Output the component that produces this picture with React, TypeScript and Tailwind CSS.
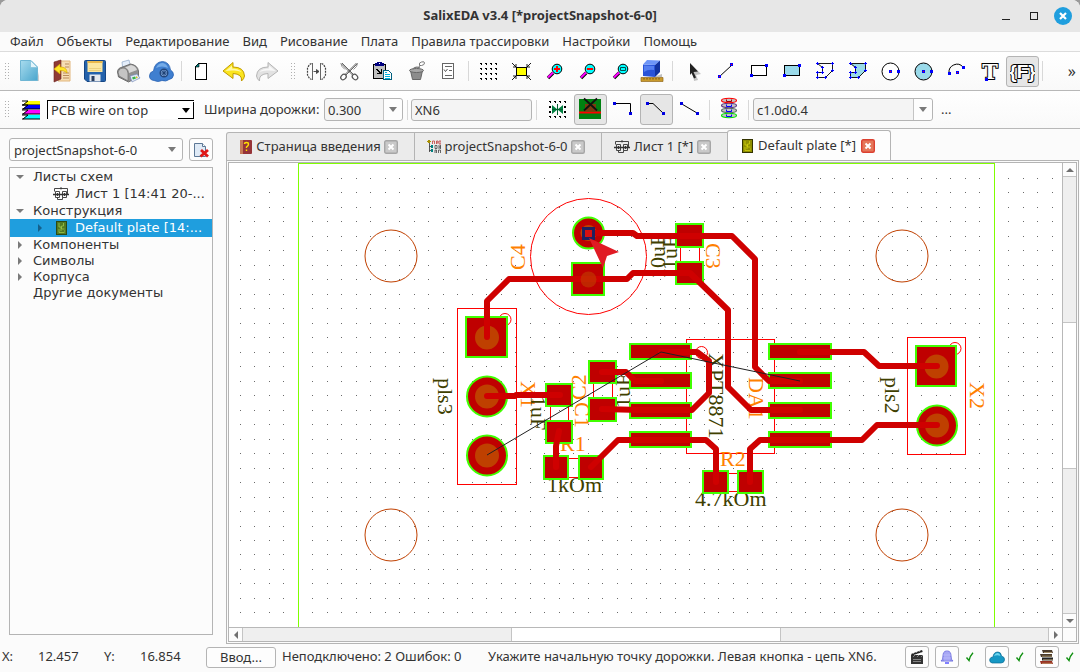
import React from "react";

type Kids = { children: React.ReactNode };

/* ---------- small building blocks ---------- */

function Ico({ children }: Kids) {
  return (
    <svg viewBox="0 0 25 25" className="block h-[25px] w-[25px]" aria-hidden="true">
      {children}
    </svg>
  );
}

function Tool({ label, active, children }: Kids & { label: string; active?: boolean }) {
  return (
    <button
      type="button"
      aria-label={label}
      aria-pressed={active}
      className={
        active
          ? "flex h-[31px] w-[33px] shrink-0 items-center justify-center rounded-[3px] border border-[#b4b4b4] bg-[#e6e6e6]"
          : "flex h-[31px] w-[33px] shrink-0 items-center justify-center"
      }
    >
      {children}
    </button>
  );
}

function Sep() {
  return (
    <div className="flex w-1.5 shrink-0 justify-center">
      <div className="h-5 w-px bg-[#d8d8d8]" />
    </div>
  );
}

function Handle() {
  return (
    <svg className="h-[17px] w-[5px] shrink-0" viewBox="0 0 5 17" shapeRendering="crispEdges" aria-hidden="true">
      {[0, 3, 6, 9, 12, 15].map((y) => (
        <path key={y} d={`M0 ${y}h1v1h-1zM3 ${y}h1v1h-1z`} fill="#b0b0b0" />
      ))}
    </svg>
  );
}

function Down({ className }: { className?: string }) {
  return (
    <svg viewBox="0 0 8 5" className={`h-[5px] w-2 ${className ?? ""}`} aria-hidden="true">
      <path d="M0 0h8L4 5z" fill="#7a7a7a" />
    </svg>
  );
}

function Node({ x, y, c = "#0000ff" }: { x: number; y: number; c?: string }) {
  return (
    <>
      <rect x={x - 1} y={y - 1} width="3" height="3" fill="#0000ff" />
      <rect x={x} y={y} width="1" height="1" fill={c} />
    </>
  );
}

/* ---------- main toolbar icons ---------- */

function NewDoc() {
  return (
    <Ico>
      <defs>
        <linearGradient id="nd" x1="0" y1="0" x2="1" y2="1">
          <stop offset="0" stopColor="#a9dcee" />
          <stop offset="1" stopColor="#4aa6cd" />
        </linearGradient>
      </defs>
      <path d="M5 22h17v-9l-2 8z" fill="#bbb" opacity=".7" />
      <path d="M3.500 1.500H14l6.500 6.500V21.500h-17z" fill="url(#nd)" stroke="#6fb6d4" />
      <path d="M13.500 1.500v7h7z" fill="#e3f5fb" stroke="#7dbdd8" strokeWidth=".7" />
    </Ico>
  );
}

function OpenDoc() {
  return (
    <Ico>
      <path d="M8 2h12v20H8z" fill="#f6ddb4" stroke="#e2b67c" />
      <path d="M15 5h4M15 8h4M13 14h6M13 16.500h6M13 19h6" stroke="#b98b5c" />
      <path d="M4 3l7-2v19l-7 3z" fill="#8f3a34" stroke="#6c2320" strokeWidth=".6" />
      <path d="M4 10l6-5v3c5 0 7 2 7 6-2-2-4-2.500-7-2.500V15z" fill="#ffe52a" stroke="#d9a800" strokeWidth=".7" />
    </Ico>
  );
}

function Save() {
  return (
    <Ico>
      <path d="M1.500 2.500q0-1 1-1h19q1 0 1 1v19q0 1-1 1H4l-2.500-2.500z" fill="#2462ab" stroke="#164684" />
      <path d="M4.500 2h15v11h-15z" fill="#fbe6a0" />
      <path d="M4.500 2h15v2h-15z" fill="#e9b84c" />
      <path d="M6 9.500h12M6 11.500h12" stroke="#e2c673" strokeWidth=".7" />
      <path d="M6.500 15.500h11v7h-11z" fill="#e5e9ee" />
      <path d="M8.500 17h3v5h-3z" fill="#2a3f60" />
    </Ico>
  );
}

function Printer() {
  return (
    <Ico>
      <path d="M6 3l7-2 2 9-8 2z" fill="#e4eefb" stroke="#8ea6c6" strokeWidth=".7" />
      <path d="M1.500 13q0-4 5-5l8-3q7 1 8 7v6l-10 5-10-5z" fill="#909090" stroke="#5c5c5c" strokeWidth=".8" />
      <path d="M2 13q1-4 5-4t5 5v8l-9-5z" fill="#c4c4c4" stroke="#6a6a6a" strokeWidth=".7" />
      <path d="M9 8.500l6-2.500q5 1 6 5l-8 3q0-4-4-5.500z" fill="#d8d8d8" />
      <path d="M14 17l7-2 3 4-8 4z" fill="#dfe8f5" stroke="#6c80b0" strokeWidth=".6" />
      <path d="M16 18.500l3-1 1 2-3 1z" fill="#35b44a" />
      <path d="M20 17l2 1.500-2 1z" fill="#e0c420" />
    </Ico>
  );
}

function Cloud() {
  return (
    <Ico>
      <path
        d="M5 21.500q-4.500-.5-4.500-4.500 0-4 4-5 1-9 9-9.500 7 .5 8 8.500 3 1.500 3 5-.5 4-4.500 4.500-3 2.500-7 1-4 2-8 0z"
        fill="#3f7fd0"
        stroke="#2c64b4"
        strokeWidth=".8"
      />
      <path d="M7 9q2-5 7-5 4 1 5 5-6-3-12 0z" fill="#74abe8" />
      <circle cx="15" cy="14" r="3.800" fill="#7fa6d8" stroke="#23477c" strokeWidth="1.400" />
      <path d="M15 10v8M11 14h8M12.500 11.500l5 5M17.500 11.500l-5 5" stroke="#23477c" strokeWidth=".8" />
      <circle cx="15" cy="14" r="1.400" fill="#1f4173" />
    </Ico>
  );
}

function BlankPage() {
  return (
    <Ico>
      <path d="M10.500 4.500h8v16h-11v-13z" fill="#fff" stroke="#000" shapeRendering="crispEdges" />
      <path d="M7 8l4-4v4z" fill="#008080" stroke="#000" strokeWidth=".6" />
    </Ico>
  );
}

function Undo() {
  return (
    <Ico>
      <path
        d="M2 12L12 3.500v4.500q11 0 11.500 9-.5 3-3 5 1-7-8.500-7.500v5z"
        fill="#fbe51e"
        stroke="#c19a00"
        strokeLinejoin="round"
      />
      <path d="M4.500 12L11 6.500V9.500q7 0 9.500 3.500-4-2-9.500-1.500z" fill="#fff8a8" />
    </Ico>
  );
}

function Redo() {
  return (
    <Ico>
      <path
        d="M24 12L14 3.500v4.500q-11 0-11.500 9 .5 3 3 5-1-7 8.500-7.500v5z"
        fill="#e2e2e2"
        stroke="#b5b5b5"
        strokeLinejoin="round"
      />
      <path d="M21.500 12L15 6.500V9.500q-7 0-9.500 3.500 4-2 9.500-1.500z" fill="#f8f8f8" />
    </Ico>
  );
}

function Mirror() {
  return (
    <Ico>
      <path d="M8.500 4v17M16.500 4v17" stroke="#666" />
      <path d="M7.500 4.500L5.500 5.500 3.500 9v7l2 3.500 2 1M17.500 4.500l2 1 2 3.500v7l-2 3.500-2 1" fill="none" stroke="#444" strokeWidth="1.200" strokeDasharray="2 1" />
      <path d="M9.500 12.500h5M12.500 10.500l2.500 2-2.500 2z" stroke="#444" strokeWidth=".9" fill="#444" />
    </Ico>
  );
}

function Cut() {
  return (
    <Ico>
      <path d="M4 4.500l12 12M5 4l12 12M20.500 4.500l-12 12M19.500 4l-12 12" stroke="#555" strokeWidth=".9" />
      <path d="M4 4.500q0 3 4 6M20.500 4.500q0 3-4 6" stroke="#777" fill="none" strokeWidth=".8" />
      <ellipse cx="6.500" cy="18" rx="3" ry="2.400" transform="rotate(-45 6.500 18)" fill="#fff" stroke="#555" strokeWidth="1.200" />
      <ellipse cx="18" cy="18" rx="3" ry="2.400" transform="rotate(45 18 18)" fill="#fff" stroke="#555" strokeWidth="1.200" />
    </Ico>
  );
}

function Paste() {
  return (
    <Ico>
      <g shapeRendering="crispEdges">
        <path d="M3.500 5.500h12v14h-12z" fill="#c0c0c0" stroke="#000" />
        <path d="M5 4h9v3H5z" fill="#000080" />
        <path d="M7 3h5v1H7z" fill="#000080" />
        <path d="M9 4h1v1H9z" fill="#fff" />
        <path d="M6 10h2v1H6zM7 11h2v1H7zM8 12h2v1H8zM9 13h2v1H9zM11 10h1v5h-5v-1h4z" fill="#000" />
        <path d="M13.500 11.500h5l3 3v6h-8z" fill="#fff" stroke="#006080" />
        <path d="M15 13h2v1h-2zM15 15h5v1h-5zM15 17h5v1h-5zM15 19h5v1h-5z" fill="#00b5e0" />
      </g>
    </Ico>
  );
}

function Bucket() {
  return (
    <Ico>
      <path d="M7.500 11.500h12l-2 9h-8z" fill="#8c8c8c" stroke="#666" />
      <ellipse cx="13.500" cy="11.500" rx="7" ry="2" fill="#a8a8a8" stroke="#666" />
      <path d="M10 10q3-3 7-1" fill="none" stroke="#777" strokeWidth="1.300" />
      <path d="M15.500 8l2-1.500M16.500 6.500q-1-3 2-3.500 3-1 3 1t-3 2.500z" fill="#fff" stroke="#777" />
    </Ico>
  );
}

function CheckList() {
  return (
    <Ico>
      <path d="M6.500 4.500h11v15h-11z" fill="#fff" stroke="#666" shapeRendering="crispEdges" />
      <path d="M9 7.500h7M13 11.500h3M9 16.500h7" stroke="#666" />
      <path d="M8 10.500l1.500 2 2-2.500" fill="none" stroke="#555" />
    </Ico>
  );
}

function Grid() {
  return (
    <Ico>
      <g shapeRendering="crispEdges">
        {[5, 10, 15, 20].map((x) =>
          [4, 9, 14, 19].map((y) => <path key={`${x}-${y}`} d={`M${x} ${y}h2v1h-2zM${x + 1} ${y + 1}h1v1h-1z`} fill="#000" />)
        )}
      </g>
    </Ico>
  );
}

function Fit() {
  return (
    <Ico>
      <path d="M8.500 8.500h10v8h-10z" fill="#ffff00" stroke="#000" shapeRendering="crispEdges" />
      <path
        d="M4 4l4 4M8 5v3H5M23 4l-4 4M19 5v3h3M4 21l4-4M5 17h3v3M23 21l-4-4M22 17h-3v3"
        fill="none"
        stroke="#000"
        strokeWidth=".9"
      />
    </Ico>
  );
}

function Lens({ children }: { children?: React.ReactNode }) {
  return (
    <Ico>
      <path d="M12 14l-5 5" stroke="#000" strokeWidth="3.400" />
      <path d="M12 13.500l-5 5" stroke="#ff00ff" strokeWidth="2.200" />
      <circle cx="16" cy="10" r="4.800" fill="#00ffff" stroke="#000" />
      {children}
    </Ico>
  );
}

function Cube() {
  return (
    <Ico>
      <path d="M1 18.500h22v4H1z" fill="#c99a2c" stroke="#94691b" strokeWidth=".7" />
      <path d="M4 19v1.500M7 19v1.500M10 19v1.500M13 19v1.500M16 19v1.500M19 19v1.500" stroke="#5c3d0d" strokeWidth=".8" />
      <path d="M16 17l6-2v3h-7z" fill="#999" opacity=".6" />
      <path d="M3 5.500L15 6v12L3 17z" fill="#2953d8" />
      <path d="M3 5.500L7 1l13 .5L15 6z" fill="#6d95f7" />
      <path d="M20 1.500V13l-5 5V6z" fill="#1233a0" />
      <path d="M4 6.500l10 .5v4Q8 10 4 13z" fill="#557ff0" />
    </Ico>
  );
}

function Pointer() {
  return (
    <Ico>
      <path d="M13 6l9 9-5 1 2 5-4 1z" fill="#aaa" opacity=".7" />
      <path d="M11 4l8 8.500-4.500.500 2.500 5.500-2 1-2.500-5.500L11 16z" fill="#222" />
    </Ico>
  );
}

function LineTool() {
  return (
    <Ico>
      <path d="M7 18L20 6" stroke="#000" />
      <g shapeRendering="crispEdges">
        <Node x={7} y={17} c="#ff0000" />
        <Node x={19} y={5} c="#ff0000" />
      </g>
    </Ico>
  );
}

function RectTool({ fill }: { fill: string }) {
  return (
    <Ico>
      <g shapeRendering="crispEdges">
        <path d="M6.500 6.500h15v10h-15z" fill={fill} stroke="#000" />
        <Node x={21} y={6} />
        <Node x={6} y={16} />
      </g>
    </Ico>
  );
}

function PolyTool({ fill }: { fill: string }) {
  const pts = [
    [6, 4],
    [21, 4],
    [21, 11],
    [14, 18],
    [6, 18],
    [6, 13],
    [11, 13],
    [11, 8],
  ];
  return (
    <Ico>
      <path d="M6.500 4.500h15v7l-7 7h-8v-5h5v-5z" fill={fill} stroke="#000" strokeWidth=".9" />
      <g shapeRendering="crispEdges">
        {pts.map(([x, y]) => (
          <path key={`${x}-${y}`} d={`M${x - 1} ${y}h3v1h-3zM${x} ${y - 1}h1v3h-1z`} fill="#0000ff" />
        ))}
      </g>
    </Ico>
  );
}

function CircleTool({ fill }: { fill: string }) {
  return (
    <Ico>
      <circle cx="13.500" cy="12.500" r="8.500" fill={fill} stroke="#000" />
      <g shapeRendering="crispEdges">
        <Node x={13} y={12} c="#ff0000" />
        <Node x={21} y={12} />
      </g>
    </Ico>
  );
}

function ArcTool() {
  return (
    <Ico>
      <path d="M6 14a8 8 0 0 1 14-6" fill="none" stroke="#000" />
      <g shapeRendering="crispEdges">
        <Node x={6} y={14} />
        <Node x={20} y={8} />
        <Node x={14} y={13} c="#ff0000" />
      </g>
    </Ico>
  );
}

function TextTool() {
  return (
    <Ico>
      <text
        x="14"
        y="20"
        textAnchor="middle"
        fontFamily="DejaVu Serif"
        fontWeight="700"
        fontSize="21"
        fill="#fff"
        stroke="#000"
        strokeWidth="2"
        paintOrder="stroke"
      >
        T
      </text>
      <rect x="9" y="19" width="3" height="3" fill="#0000ff" />
    </Ico>
  );
}

function ParamTool() {
  return (
    <Ico>
      <text
        x="12.500"
        y="18.500"
        textAnchor="middle"
        fontFamily="Liberation Sans"
        fontWeight="700"
        fontSize="19"
        fill="#fff"
        stroke="#000"
        strokeWidth="2"
        paintOrder="stroke"
      >
        {"{F}"}
      </text>
    </Ico>
  );
}

/* ---------- second toolbar icons ---------- */

function Layers() {
  const rows: [number, string][] = [
    [1, "#ffff00"],
    [5, "#0000ff"],
    [10, "#ff00ff"],
    [15, "#00ffff"],
  ];
  return (
    <svg viewBox="0 0 18 20" className="h-5 w-[18px] shrink-0" aria-hidden="true">
      {rows.map(([y, c]) => (
        <g key={c}>
          <path d={`M5 ${y}H18v4H1z`} fill={c} />
          <path d={`M0 ${y + 4}H18M0 ${y}h6l-5 4`} stroke="#000" fill="none" />
        </g>
      ))}
    </svg>
  );
}

function Snap() {
  return (
    <Ico>
      <g shapeRendering="crispEdges" fill="#000">
        {[4, 9, 14, 19].map((x) => (
          <path key={x} d={`M${x} 4h2v1h-2zM${x + 1} 5h1v1h-1zM${x} 19h2v1h-2zM${x + 1} 20h1v1h-1z`} />
        ))}
        <path d="M4 9h2v2H4zM4 14h2v2H4zM19 9h2v2h-2zM19 14h2v2h-2z" />
      </g>
      <path d="M7 8l5.500 4.500L7 17zM18 8l-5.500 4.500L18 17z" fill="#008040" />
      <path d="M12.500 7v11M7 12.500h11" stroke="#006030" />
    </Ico>
  );
}

function WireOver() {
  return (
    <Ico>
      <path d="M1 2h22v20H1z" fill="#008010" />
      <path d="M7 7h11v7H7z" fill="#7a3a10" />
      <path d="M1 15.500h22" stroke="#ff0000" strokeWidth="2" />
      <path d="M6 1.500l13 12M19 1.500L6 13.500" stroke="#101010" strokeWidth="1.800" />
    </Ico>
  );
}

function Wire({ d, a, b }: { d: string; a: [number, number]; b: [number, number] }) {
  return (
    <Ico>
      <path d={d} fill="none" stroke="#000" />
      <g shapeRendering="crispEdges" fill="#0000e0">
        <rect x={a[0] - 1} y={a[1] - 1} width="3" height="3" />
        <rect x={b[0] - 1} y={b[1] - 1} width="3" height="3" />
      </g>
    </Ico>
  );
}

function Via() {
  const rings: [number, string][] = [
    [18.5, "#00e000"],
    [13.5, "#557060"],
    [8.5, "#5c3580"],
    [3.5, "#ff0000"],
  ];
  return (
    <Ico>
      {rings.map(([y, c]) => (
        <g key={c}>
          <ellipse cx="13" cy={y} rx="7.500" ry="2.200" fill="#c4c4c4" stroke={c} strokeWidth="1.100" />
          <path d={`M10.500 ${y - 1}v2h5v-2`} fill="none" stroke={c === "#ff0000" ? "#a00000" : "#0000ff"} />
        </g>
      ))}
    </Ico>
  );
}

/* ---------- document icons ---------- */

function BookIcon() {
  return (
    <svg viewBox="0 0 14 16" className="h-4 w-3.5 shrink-0" aria-hidden="true">
      <rect x="1" y="1" width="12" height="14" rx="1" fill="#963438" />
      <path d="M1 1h3v14H1z" fill="#c77a58" />
      <path d="M5.500 5q0-1.500 2-1.500t2 1.700Q9.500 6.500 7.500 8v1M7.500 10.500v1.500" fill="none" stroke="#ffe000" strokeWidth="1.400" />
    </svg>
  );
}

function TreeIcon() {
  return (
    <svg viewBox="0 0 14 14" className="h-3.5 w-3.5 shrink-0" aria-hidden="true">
      <path d="M2.500 2v10M2.500 6.500h3M2.500 10.500h3" stroke="#333" strokeWidth=".8" />
      <path d="M1 0h2v1h1v1H3v1H1V2H0V1h1z" fill="#a89000" />
      <path d="M4 5h2v3H4zM4 9h2v3H4z" fill="#008080" />
      <path d="M5.500 4V1h2v3M9.500 4V1h1.500v2H9.500M12 1h2v3h-2z" fill="none" stroke="#c04040" strokeWidth=".8" />
      <path d="M8 5.500h2v3H8zM12 5v4M13.500 5v4M12 7h2M8 13v-3h1.500v3M11.500 13v-3h2v3" fill="none" stroke="#444" strokeWidth=".8" />
    </svg>
  );
}

function SheetIcon() {
  return (
    <svg viewBox="0 0 16 14" className="h-3.5 w-4 shrink-0" aria-hidden="true">
      <g fill="none" stroke="#333" strokeWidth=".9">
        <path d="M2.500 4.500h4v6h-4zM9.500 4.500h4v6h-4zM1.500 4.500v-3h13v6M4.500 10.500v2h5v-2M8 0v2.500" />
        <path d="M0 7.500h16M4.500 6v3M11.500 6v3" strokeWidth="1.300" />
      </g>
    </svg>
  );
}

function BoardIcon({ bright }: { bright?: boolean }) {
  return (
    <svg viewBox="0 0 11 14" className="h-3.5 w-[11px] shrink-0" aria-hidden="true">
      <rect x=".5" y=".5" width="10" height="13" fill={bright ? "#8f8f00" : "#527a22"} stroke={bright ? "#333300" : "#2c4a12"} />
      <path
        d="M3 2v4h2v4M7.500 2v3h-2v3h3M3 8v3.500h5.500M8.500 9.500v1"
        fill="none"
        stroke={bright ? "#d8d810" : "#a8d050"}
        strokeWidth=".7"
      />
    </svg>
  );
}

function CloseBox({ hot, label }: { hot?: boolean; label: string }) {
  return (
    <button type="button" aria-label={label} className="h-3.5 w-3.5 shrink-0">
      <svg viewBox="0 0 14 14" className="block h-3.5 w-3.5">
        <rect x=".7" y=".7" width="12.600" height="12.600" rx="1.500" fill={hot ? "#e5775a" : "#c9c9c9"} stroke={hot ? "#dc4030" : "#a6a6a6"} strokeWidth="1.400" />
        <path d="M4.500 4.500l5 5M9.500 4.500l-5 5" stroke="#fff" strokeWidth="2" />
      </svg>
    </button>
  );
}

/* ---------- board drawing ---------- */

const ORANGE = "#ff8000";
const OLIVE = "#404000";

function Dots() {
  let d = "";
  for (let i = 0; i < 140; i++) {
    const x = Math.floor(240 + i * 14.5);
    if (x === 298) continue;
    for (let k = 0; k < 80; k++) d += `M${x} ${Math.round(178 + k * 14.48)}h1v1h-1z`;
  }
  return <path d={d} fill="#6a6a6a" shapeRendering="crispEdges" />;
}

function Pad({ x, y, w, h }: { x: number; y: number; w: number; h: number }) {
  return <rect x={x + 1} y={y + 1} width={w - 2} height={h - 2} fill="#bf0000" stroke="#40ff00" strokeWidth="2" />;
}

function RoundPad({ x, y, r, hole }: { x: number; y: number; r: number; hole: number }) {
  return (
    <>
      <circle cx={x} cy={y} r={r - 1} fill="#bf0000" stroke="#40ff00" strokeWidth="2" />
      <circle cx={x} cy={y} r={hole} fill="#bf4000" />
    </>
  );
}

function Label({ x, y, rot = 0, fill, children }: { x: number; y: number; rot?: number; fill: string; children: string }) {
  return (
    <text transform={`translate(${x} ${y}) rotate(${rot})`} fill={fill} fontFamily="Liberation Serif" fontSize="22">
      {children}
    </text>
  );
}

const traces = [
  "M588 233H633L637 236H732L755 259V367L769 381H800",
  "M487 337V301L509 279H627L633 273H690L728 310V387L751 410H800",
  "M487 396H515L516 395H560",
  "M559 431L556 446V467",
  "M591 467L618 440H706L716 449V482",
  "M602 372H626L635 381H661",
  "M602 409L640 410H692L709 393V361L697 352H661",
  "M750 482V449L760 440H862L877 425H937",
  "M800 352H864L879 366H937",
];

function Board() {
  return (
    <svg className="min-h-[464px] min-w-0 flex-1 bg-white" role="img" aria-label="Default plate">
      <g transform="translate(-229 -163)">
        <Dots />
        <path d="M298.500 900V163.500H994.500V900" fill="none" stroke="#80ff00" shapeRendering="crispEdges" />
        <g fill="none" stroke="#c04000">
          <circle cx="391" cy="256" r="26" />
          <circle cx="902" cy="256" r="26" />
          <circle cx="391" cy="535" r="26" />
          <circle cx="902" cy="535" r="26" />
        </g>
        <g fill="none" stroke="#ff0000">
          <circle cx="588.500" cy="256.500" r="58" />
          <circle cx="505" cy="319.500" r="6" />
          <circle cx="701.500" cy="352.500" r="6" />
          <circle cx="955" cy="348.500" r="6" />
          <path
            shapeRendering="crispEdges"
            d="M457.500 308.500h59v176h-59zM907.500 337.500h58v117h-58zM686.500 339.500h88v114h-88zM680.500 240v30M699.500 240v30M593.500 375v30M612.500 375v30M550.500 400v25M568.500 400v25M565 458.500h20M565 477.500h20M725 473.500h20M725 491.500h20"
          />
        </g>

        <Label x={525} y={270} rot={-90} fill={ORANGE}>C4</Label>
        <Label x={706} y={243} rot={90} fill={ORANGE}>C3</Label>
        <Label x={665} y={279} rot={-90} fill={OLIVE}>10uF</Label>
        <Label x={677} y={270} rot={-90} fill={OLIVE}>1uF</Label>
        <Label x={438} y={378} rot={90} fill={OLIVE}>pls3</Label>
        <Label x={521} y={381} rot={90} fill={ORANGE}>X1</Label>
        <Label x={531} y={396} rot={90} fill={OLIVE}>1uF</Label>
        <Label x={586} y={400} rot={-90} fill={ORANGE}>C2</Label>
        <Label x={575} y={402} rot={90} fill={ORANGE}>C1</Label>
        <Label x={630} y={408} rot={-90} fill={OLIVE}>1uF</Label>
        <Label x={560} y={451} fill={ORANGE}>R1</Label>
        <Label x={547} y={492} fill={OLIVE}>1kOm</Label>
        <Label x={720} y={466} fill={ORANGE}>R2</Label>
        <Label x={695} y={506} fill={OLIVE}>4.7kOm</Label>
        <Label x={709} y={353} rot={90} fill={OLIVE}>XPT8871</Label>
        <Label x={749} y={377} rot={90} fill={ORANGE}>DA1</Label>
        <Label x={885} y={377} rot={90} fill={OLIVE}>pls2</Label>
        <Label x={970} y={382} rot={90} fill={ORANGE}>X2</Label>

        <RoundPad x={588.5} y={233} r={16.5} hole={8} />
        <Pad x={571} y={262} w={34} h={34} />
        <Pad x={465} y={316} w={43} h={42} />
        <circle cx="487" cy="337.500" r="12" fill="#bf4000" />
        <RoundPad x={487} y={396.5} r={21} hole={12} />
        <RoundPad x={487} y={455.5} r={21} hole={12} />
        <Pad x={915} y={345} w={42} h={42} />
        <circle cx="936.500" cy="366.500" r="12" fill="#bf4000" />
        <RoundPad x={937} y={425.5} r={21} hole={12} />
        {[343, 372, 402, 431].map((y) => (
          <g key={y}>
            <Pad x={629} y={y} w={63} h={17} />
            <Pad x={768} y={y} w={64} h={17} />
          </g>
        ))}
        <Pad x={675} y={223} w={29} h={25} />
        <Pad x={675} y={261} w={29} h={24} />
        <Pad x={588} y={360} w={29} h={24} />
        <Pad x={588} y={397} w={29} h={25} />
        <Pad x={545} y={383} w={28} h={24} />
        <Pad x={545} y={420} w={28} h={24} />
        <Pad x={543} y={455} w={26} h={25} />
        <Pad x={578} y={455} w={26} h={25} />
        <Pad x={702} y={470} w={27} h={24} />
        <Pad x={737} y={470} w={27} h={24} />

        <g fill="none" stroke="#cf0000" strokeWidth="6" strokeLinejoin="round" strokeLinecap="round">
          {traces.map((d) => (
            <path key={d} d={d} />
          ))}
        </g>
        <circle cx="588.500" cy="279.500" r="8" fill="#bf4000" opacity=".6" />
        <path d="M487 455L661 352L800 381" fill="none" stroke="#202020" />
        <rect x="583.500" y="228.500" width="10" height="10" fill="#cf0000" stroke="#202060" strokeWidth="3" />
        <path d="M585 230h7v7h-7z" fill="#d81010" />
        <path d="M589 238L619 252L607 256L603 268Z" fill="#e01b24" />
      </g>
    </svg>
  );
}

/* ---------- page parts ---------- */

function Arrow({ d, label, className }: { d: string; label: string; className: string }) {
  return (
    <button type="button" aria-label={label} className={`flex shrink-0 items-center justify-center bg-[#fcfcfc] ${className}`}>
      <svg viewBox="0 0 8 8" className="h-2 w-2">
        <path d={d} fill="#707070" />
      </svg>
    </button>
  );
}

const menu = ["Файл", "Объекты", "Редактирование", "Вид", "Рисование", "Плата", "Правила трассировки", "Настройки", "Помощь"];

function TitleBar() {
  return (
    <header className="grid h-8 grid-cols-[1fr_auto_1fr] items-center rounded-t-lg bg-[#e7e7e7]">
      <span />
      <h1 className="text-[13px] font-bold text-[#333]">SalixEDA v3.4 [*projectSnapshot-6-0]</h1>
      <div className="flex items-center justify-end gap-5 pr-2">
        <button type="button" aria-label="Свернуть" className="h-2 w-2 border-b border-[#222]" />
        <button type="button" aria-label="Развернуть" className="h-2 w-2 border border-[#222]" />
        <button type="button" aria-label="Закрыть" className="-ml-1 flex h-[18px] w-[18px] items-center justify-center rounded-full bg-[#1f9ede]">
          <svg viewBox="0 0 8 8" className="h-2 w-2">
            <path d="M1 1l6 6M7 1L1 7" stroke="#fff" strokeWidth="2.200" />
          </svg>
        </button>
      </div>
    </header>
  );
}

function MainToolbar() {
  return (
    <div className="flex h-[39px] items-center border-b border-[#b8b8b8] bg-gradient-to-b from-white to-[#f9f9f9] pl-[5px] pr-1">
      <Handle />
      <div className="w-[3px] shrink-0" />
      <Tool label="Новый"><NewDoc /></Tool>
      <Tool label="Открыть"><OpenDoc /></Tool>
      <Tool label="Сохранить"><Save /></Tool>
      <Tool label="Печать"><Printer /></Tool>
      <Tool label="Облако"><Cloud /></Tool>
      <Sep />
      <Tool label="Страница"><BlankPage /></Tool>
      <Tool label="Отменить"><Undo /></Tool>
      <Tool label="Повторить"><Redo /></Tool>
      <div className="flex w-[17px] shrink-0 justify-center pl-1"><Handle /></div>
      <Tool label="Отразить"><Mirror /></Tool>
      <Tool label="Вырезать"><Cut /></Tool>
      <Tool label="Вставить"><Paste /></Tool>
      <Tool label="Удалить"><Bucket /></Tool>
      <Tool label="Свойства"><CheckList /></Tool>
      <Sep />
      <Tool label="Сетка"><Grid /></Tool>
      <Tool label="Вписать"><Fit /></Tool>
      <Tool label="Увеличить">
        <Lens><path d="M13 10h6M16 7v6" stroke="#ff0000" strokeWidth="2" /></Lens>
      </Tool>
      <Tool label="Уменьшить">
        <Lens><path d="M13 10h6" stroke="#ff0000" strokeWidth="2" /></Lens>
      </Tool>
      <Tool label="Увеличить область">
        <Lens><path d="M13.500 8.500h5v3h-5z" fill="none" stroke="#005050" /></Lens>
      </Tool>
      <Tool label="3D"><Cube /></Tool>
      <Sep />
      <Tool label="Выбор"><Pointer /></Tool>
      <Tool label="Линия"><LineTool /></Tool>
      <Tool label="Прямоугольник"><RectTool fill="#fff" /></Tool>
      <Tool label="Залитый прямоугольник"><RectTool fill="#9adaea" /></Tool>
      <Tool label="Многоугольник"><PolyTool fill="none" /></Tool>
      <Tool label="Залитый многоугольник"><PolyTool fill="#9adaea" /></Tool>
      <Tool label="Окружность"><CircleTool fill="#fff" /></Tool>
      <Tool label="Круг"><CircleTool fill="#9adaea" /></Tool>
      <Tool label="Дуга"><ArcTool /></Tool>
      <Tool label="Текст"><TextTool /></Tool>
      <div className="ml-px flex">
        <Tool label="Параметр" active><ParamTool /></Tool>
      </div>
      <Sep />
      <button type="button" aria-label="Ещё" className="ml-auto text-base leading-none">»</button>
    </div>
  );
}

function WireToolbar() {
  return (
    <div className="flex h-[38px] items-center border-b border-[#b8b8b8] bg-gradient-to-b from-white to-[#f9f9f9] pl-[5px]">
      <Handle />
      <div className="ml-3 mr-[7px] flex"><Layers /></div>
      <div className="relative w-[147px] shrink-0">
        <select aria-label="Слой" className="block h-[19px] w-full appearance-none border-l border-t border-black bg-white pl-[3px] leading-4">
          <option>PCB wire on top</option>
        </select>
        <span className="pointer-events-none absolute bottom-0 right-0 flex h-[17px] w-4 items-center justify-center border-b border-r border-black">
          <svg viewBox="0 0 8 5" className="h-[5px] w-2"><path d="M0 0h8L4 5z" fill="#000" /></svg>
        </span>
      </div>
      <label htmlFor="width" className="ml-2.5 w-[120px] shrink-0 whitespace-nowrap">Ширина дорожки:</label>
      <div className="relative w-[79px] shrink-0">
        <select id="width" className="block h-[23px] w-full appearance-none rounded-[3px] border border-[#b4b4b4] bg-[#f4f4f4] pl-[3px] leading-5">
          <option>0.300</option>
        </select>
        <span className="pointer-events-none absolute inset-y-px right-px flex w-[19px] items-center justify-center rounded-r-[3px] border-l border-[#c4c4c4] bg-[#fdfdfd]"><Down /></span>
      </div>
      <div className="mx-px"><Sep /></div>
      <input aria-label="Цепь" defaultValue="XN6" className="h-[22px] w-[121px] shrink-0 rounded-[3px] border border-[#b4b4b4] bg-[#f4f4f4] px-[3px]" />
      <div className="ml-px mr-0.5"><Sep /></div>
      <Tool label="Привязка к сетке"><Snap /></Tool>
      <Tool label="Проверка зазоров" active><WireOver /></Tool>
      <Tool label="Под прямым углом"><Wire d="M3 6.500h16.500V16" a={[3, 6]} b={[19, 16]} /></Tool>
      <Tool label="Под 45 градусов" active><Wire d="M3 6.500h6L19 16" a={[3, 6]} b={[19, 16]} /></Tool>
      <Tool label="Под любым углом"><Wire d="M4 6.500L20 16" a={[4, 6]} b={[20, 16]} /></Tool>
      <Sep />
      <Tool label="Переходное отверстие"><Via /></Tool>
      <div className="mr-0.5"><Sep /></div>
      <div className="relative w-[180px] shrink-0">
        <select aria-label="Тип перехода" className="block h-[23px] w-full appearance-none rounded-[3px] border border-[#b4b4b4] bg-[#f4f4f4] pl-[3px] leading-5">
          <option>c1.0d0.4</option>
        </select>
        <span className="pointer-events-none absolute inset-y-px right-px flex w-[19px] items-center justify-center rounded-r-[3px] border-l border-[#c4c4c4] bg-[#fdfdfd]"><Down /></span>
      </div>
      <button type="button" className="ml-2">...</button>
    </div>
  );
}

function Twist({ open, light }: { open?: boolean; light?: boolean }) {
  return (
    <svg viewBox="0 0 8 8" className="h-2 w-2 shrink-0" aria-hidden="true">
      <path d={open ? "M0 2h8L4 6z" : "M2 0l4 4-4 4z"} fill={light ? "#14608c" : "#7a7a7a"} />
    </svg>
  );
}

function Sidebar() {
  const closed = ["Компоненты", "Символы", "Корпуса"];
  return (
    <aside className="flex w-[213px] shrink-0 flex-col pb-[9px] pl-[9px] pt-[9px]">
      <div className="flex gap-1.5">
        <div className="relative w-[174px]">
          <select aria-label="Проект" className="block h-[23px] w-full appearance-none rounded-[3px] border border-[#b4b4b4] bg-[#fdfdfd] pl-1 leading-5">
            <option>projectSnapshot-6-0</option>
          </select>
          <Down className="pointer-events-none absolute right-[7px] top-[9px]" />
        </div>
        <button type="button" aria-label="Закрыть проект" className="flex h-[23px] w-6 items-center justify-center rounded-[3px] border border-[#b4b4b4] bg-[#fdfdfd]">
          <svg viewBox="0 0 17 16" className="h-4 w-[17px]">
            <path d="M1.500 1.500h8l3 3v10h-11z" fill="#dfeaf6" stroke="#5d7896" />
            <path d="M9.500 1.500v3h3" fill="#fff" stroke="#5d7896" />
            <path d="M8 8l7 6.500M15 8l-7.500 6.500" stroke="#e01818" strokeWidth="2.800" />
          </svg>
        </button>
      </div>
      <ul role="tree" className="mt-1.5 flex-1 border border-[#b4b4b4] bg-[#fcfcfc] font-['DejaVu_Sans'] text-[13px] leading-4">
        <li className="flex h-[17px] items-center gap-[9px] pl-1.5"><Twist open />Листы схем</li>
        <li className="flex h-[17px] items-center gap-1.5 whitespace-nowrap pl-[43px]"><SheetIcon />Лист 1 [14:41 20-...</li>
        <li className="flex h-[17px] items-center gap-[9px] pl-1.5"><Twist open />Конструкция</li>
        <li aria-selected="true" className="flex h-[18px] items-center whitespace-nowrap bg-[#1f9ede] pl-[26px] text-white">
          <Twist light /><span className="ml-3 mr-[8px] flex"><BoardIcon /></span>Default plate [14:...
        </li>
        {closed.map((t) => (
          <li key={t} className="flex h-4 items-center gap-[9px] pl-1.5"><Twist />{t}</li>
        ))}
        <li className="flex h-4 items-center pl-[23px]">Другие документы</li>
      </ul>
    </aside>
  );
}

function Tabs() {
  const tab = "flex h-7 items-center border border-b-0 border-[#b4b4b4] bg-[#ebebeb]";
  return (
    <div role="tablist" className="flex h-[30px] items-end">
      <div role="tab" className={`${tab} w-[189px] justify-between rounded-tl-[3px] pl-3 pr-4`}>
        <BookIcon /><span>Страница введения</span><CloseBox label="Закрыть Страница введения" />
      </div>
      <div role="tab" className={`${tab} w-[187px] justify-between border-l-0 pl-3 pr-4`}>
        <TreeIcon /><span>projectSnapshot-6-0</span><CloseBox label="Закрыть projectSnapshot-6-0" />
      </div>
      <div role="tab" className={`${tab} w-[125px] justify-between border-x-0 pl-3 pr-4`}>
        <SheetIcon /><span>Лист 1 [*]</span><CloseBox label="Закрыть Лист 1" />
      </div>
      <div role="tab" aria-selected="true" className="flex h-[30px] w-[164px] items-center justify-between rounded-t-[3px] border border-b-0 border-[#b4b4b4] bg-[#fdfdfd] pl-[14px] pr-[15px]">
        <BoardIcon bright /><span>Default plate [*]</span><CloseBox hot label="Закрыть Default plate" />
      </div>
    </div>
  );
}

function Workspace() {
  return (
    <main className="ml-[13px] flex min-w-0 flex-1 flex-col pr-px pt-px">
      <Tabs />
      <div className="flex flex-1 flex-col border border-[#b4b4b4] p-px">
        <div className="flex flex-1 flex-col border border-[#b4b4b4]">
          <div className="flex flex-1">
            <Board />
            <div className="flex w-3.5 shrink-0 flex-col border-l border-[#b8b8b8] bg-[#efefef]">
              <Arrow label="Вверх" d="M0 6h8L4 2z" className="h-3.5 border-b border-[#c4c4c4]" />
              <div className="flex-[146]" />
              <div className="flex-[146] border-y border-[#c4c4c4] bg-white" />
              <div className="flex-[145]" />
              <Arrow label="Вниз" d="M0 2h8L4 6z" className="h-3.5 border-t border-[#c4c4c4]" />
            </div>
          </div>
          <div className="flex h-3.5 shrink-0 border-t border-[#b8b8b8] bg-[#efefef]">
            <Arrow label="Влево" d="M6 0v8L2 4z" className="w-3.5 border-r border-[#c4c4c4]" />
            <div className="flex-[269]" />
            <div className="flex-[269] border-x border-[#c4c4c4] bg-white" />
            <div className="flex-[268]" />
            <Arrow label="Вправо" d="M2 0v8l4-4z" className="w-3.5 border-l border-[#c4c4c4]" />
            <div className="w-3.5 shrink-0 border-l border-[#b8b8b8] bg-[#fcfcfc]" />
          </div>
        </div>
      </div>
    </main>
  );
}

function StatusButton({ label, children }: Kids & { label: string }) {
  return (
    <button type="button" aria-label={label} className="flex h-[22px] w-6 shrink-0 items-center justify-center rounded-[3px] border border-[#b4b4b4] bg-[#fdfdfd]">
      <svg viewBox="0 0 16 16" className="h-4 w-4">{children}</svg>
    </button>
  );
}

function Tick() {
  return (
    <svg viewBox="0 0 10 10" className="mr-1 h-2.5 w-2.5 shrink-0" aria-hidden="true">
      <path d="M1.500 5.500L4 8.500Q5 4 8 .8" fill="none" stroke="#109010" strokeWidth="1.400" />
    </svg>
  );
}

function StatusBar() {
  return (
    <footer className="flex h-[29px] items-center whitespace-nowrap pb-[3px] pl-0.5">
      <span className="w-9">X:</span>
      <span className="w-[66px]">12.457</span>
      <span className="w-9">Y:</span>
      <span className="w-[66px]">16.854</span>
      <button type="button" className="h-[21px] w-[70px] rounded-[3px] border border-[#b4b4b4] bg-[#fdfdfd] leading-4">Ввод...</button>
      <span className="ml-1.5 w-[206px]">Неподключено: 2 Ошибок: 0</span>
      <span>Укажите начальную точку дорожки. Левая кнопка - цепь XN6.</span>
      <div className="ml-auto flex items-center gap-1.5 pr-px">
        <StatusButton label="Видео">
          <path d="M2 6h12v9H2z" fill="#333" />
          <path d="M2 5l11-4 .7 2L3 6.500z" fill="#222" />
          <path d="M4 4l1.500 1.500M7 3l1.500 1.500M10 2l1.500 1.500M4 8l2-2M8 8l2-2M12 8l2-2M4 10.500h8M4 12.500h8" stroke="#999" strokeWidth=".8" />
        </StatusButton>
        <StatusButton label="Уведомления">
          <path d="M2 12q2-1 2-5 0-5 4-5t4 5q0 4 2 5z" fill="#9a9af0" stroke="#7575e0" />
          <path d="M4 6h8M3.500 9h9M6 3v9M8 2v10M10 3v9" stroke="#c8c8ff" strokeWidth=".6" />
          <path d="M6 13h4v2H6z" fill="#8080ff" />
        </StatusButton>
        <Tick />
        <StatusButton label="Облако">
          <path d="M3 14Q0 13 .8 10 1.500 8 4 8q.5-5 5-5 3 0 3.500 4Q16 8 15.500 11q-.5 3-3.500 3z" fill="#1698c4" stroke="#0a6a94" strokeWidth=".7" />
          <path d="M5 7q1-3 4-3 2 .5 2.500 3Q8 5.500 5 7z" fill="#6fd6ee" />
        </StatusButton>
        <Tick />
        <StatusButton label="Библиотека">
          <path d="M3 1h10l1 3H4zM1 5h12v3H2z" fill="#4a3a2a" />
          <path d="M3 8.500h11v3H3z" fill="#222" />
          <path d="M1 12h12l1 3H2z" fill="#983020" />
          <path d="M5 3.500h8M3 7.200h10M4 10.800h10M3 14.300h10" stroke="#c8b080" strokeWidth=".7" />
        </StatusButton>
        <Tick />
      </div>
    </footer>
  );
}

export default function App() {
  return (
    <div className="bg-[#9a9a9a] font-['Noto_Sans',sans-serif] text-[13px] text-[#333]">
      <div className="flex min-h-screen flex-col rounded-t-lg bg-[#fbfbfb]">
        <TitleBar />
        <nav className="flex h-5 items-center gap-[13px] whitespace-nowrap border-b border-[#dcdcdc] px-2.5 pb-0.5 leading-4">
          {menu.map((m) => (
            <button type="button" key={m}>{m}</button>
          ))}
        </nav>
        <MainToolbar />
        <WireToolbar />
        <div className="flex min-h-0 flex-1">
          <Sidebar />
          <Workspace />
        </div>
        <StatusBar />
      </div>
    </div>
  );
}
